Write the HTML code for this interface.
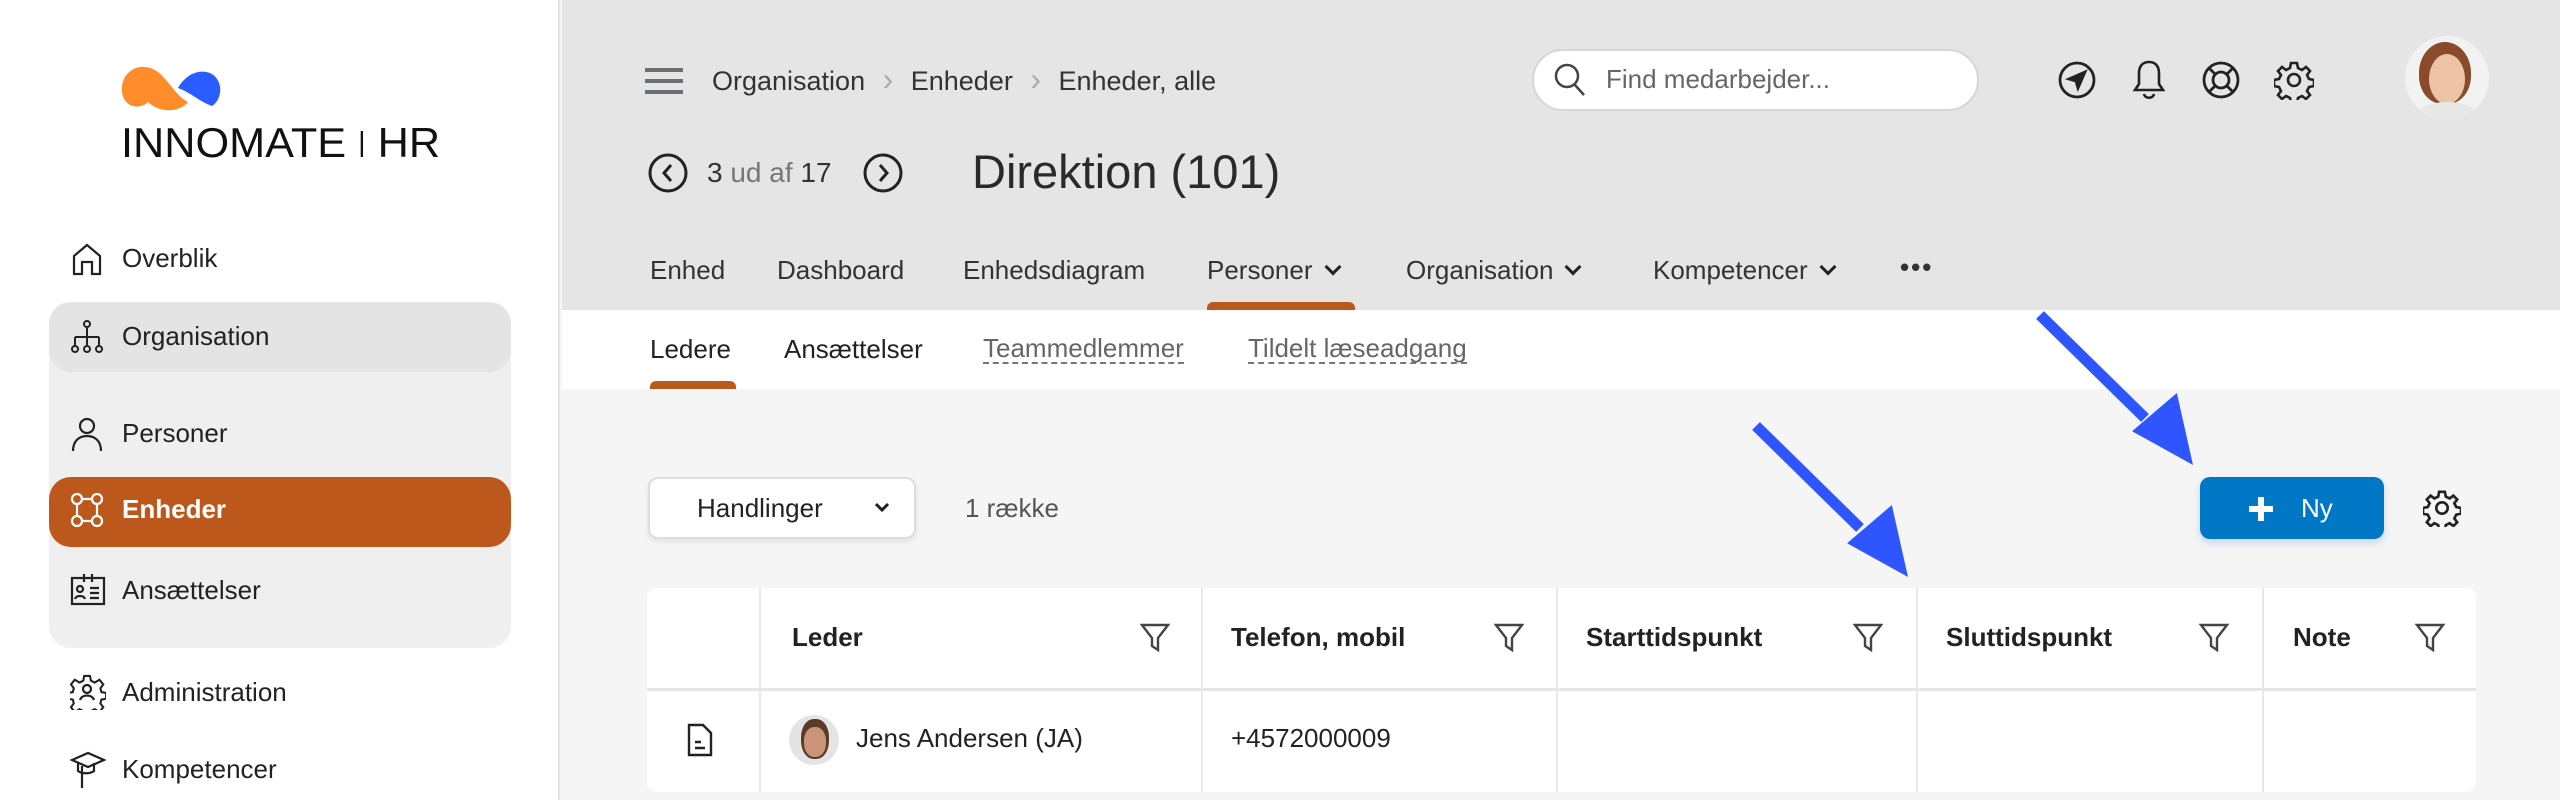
<!DOCTYPE html>
<html><head><meta charset="utf-8">
<style>
*{box-sizing:border-box;margin:0;padding:0}
body{width:2560px;height:800px;overflow:hidden;background:#f5f5f5;font-family:"Liberation Sans",sans-serif;color:#2a2a2a;position:relative}
.abs{position:absolute}
#side{left:0;top:0;width:560px;height:800px;background:#fff;border-right:2px solid #e4e4e4}
.nav{position:absolute;left:122px;font-size:26px;color:#222;line-height:30px}
.ic{position:absolute;left:70px}
#hdr{left:562px;top:0;width:1998px;height:310px;background:#e5e5e5}
#sub{left:562px;top:310px;width:1998px;height:79px;background:#fff}
.t{position:absolute;font-size:26px;line-height:30px;color:#333}
.th{position:absolute;font-size:26px;font-weight:bold;line-height:30px;color:#222}
.vl{position:absolute;top:588px;width:2px;height:204px;background:#e8e8e8}
.cv{display:inline-block;width:12px;height:12px;border-right:3px solid #222;border-bottom:3px solid #222;transform:rotate(45deg);margin-left:14px;vertical-align:6px}
</style></head><body>
<div id="side" class="abs">
  <svg class="abs" style="left:120px;top:62px" width="110" height="52" viewBox="0 0 110 52">
    <path d="M2 30 C0 8 22 -2 38 10 C50 20 56 34 68 40 C58 52 38 50 28 40 C20 48 4 46 2 30Z" fill="#ff8c2a"/>
    <path d="M58 26 C66 12 80 6 92 12 C104 20 102 38 92 44 C80 40 70 30 58 26Z" fill="#2a5cff"/>
  </svg>
  <div class="abs" style="left:121px;top:120px;font-size:42px;line-height:44px;color:#111;transform:scaleX(1.03);transform-origin:left">INNOMATE <span style="font-size:28px;vertical-align:6px">|</span> HR</div>
  <div class="abs" style="left:49px;top:302px;width:462px;height:346px;background:#efefef;border-radius:22px"></div>
  <div class="abs" style="left:49px;top:302px;width:462px;height:70px;background:#e4e4e4;border-radius:22px"></div>
  <div class="abs" style="left:49px;top:477px;width:462px;height:70px;background:#bd581c;border-radius:22px"></div>
  <svg class="ic" style="top:242px" width="34" height="34" viewBox="0 0 34 34" fill="none" stroke="#222" stroke-width="2.2"><path d="M4 32V14L17 3l13 11v18h-8V20h-10v12z"/></svg>
  <div class="nav" style="top:243px">Overblik</div>
  <svg class="ic" style="top:320px" width="34" height="34" viewBox="0 0 34 34" fill="none" stroke="#222" stroke-width="2"><circle cx="17" cy="4" r="3"/><path d="M17 7v10M5 17h24M5 17v8M17 17v8M29 17v8"/><circle cx="5" cy="29" r="3"/><circle cx="17" cy="29" r="3"/><circle cx="29" cy="29" r="3"/></svg>
  <div class="nav" style="top:321px">Organisation</div>
  <svg class="ic" style="top:416px" width="34" height="36" viewBox="0 0 34 36" fill="none" stroke="#222" stroke-width="2.2"><circle cx="17" cy="10" r="7"/><path d="M3 35c0-10 6-15 14-15s14 5 14 15"/></svg>
  <div class="nav" style="top:418px">Personer</div>
  <svg class="ic" style="top:492px" width="34" height="36" viewBox="0 0 34 36" fill="none" stroke="#fff" stroke-width="2.2"><circle cx="7" cy="7" r="5"/><circle cx="27" cy="7" r="5"/><circle cx="7" cy="29" r="5"/><circle cx="27" cy="29" r="5"/><path d="M12 7h10M7 12v12M27 12v12M12 29h10"/></svg>
  <div class="nav" style="top:494px;color:#fff;font-weight:bold">Enheder</div>
  <svg class="ic" style="top:572px" width="36" height="34" viewBox="0 0 36 34" fill="none" stroke="#222" stroke-width="2.2"><rect x="2" y="6" width="32" height="26"/><path d="M14 2v8M22 2v8"/><circle cx="10" cy="17" r="3"/><path d="M5 27c1-4 9-4 10 0M20 16h9M20 21h9M20 26h9"/></svg>
  <div class="nav" style="top:575px">Ansættelser</div>
  <svg class="ic" style="top:674px" width="36" height="36" viewBox="0 0 36 36" fill="none" stroke="#222" stroke-width="2.2"><path d="M15 2h6l1 5 4 2 5-3 4 5-3 4 1 4 5 1v6l-5 1-1 4 3 4-4 5-5-3-4 2-1 5h-6l-1-5-4-2-5 3-4-5 3-4-1-4-5-1v-6l5-1 1-4-3-4 4-5 5 3 4-2z" transform="scale(.95)"/><circle cx="17" cy="15" r="4"/><path d="M10 26c2-6 12-6 14 0"/></svg>
  <div class="nav" style="top:677px">Administration</div>
  <svg class="ic" style="top:750px" width="36" height="40" viewBox="0 0 36 40" fill="none" stroke="#222" stroke-width="2.2"><path d="M2 10l16-7 16 7-16 7z"/><path d="M8 13v8c4 3 12 3 16 0v-8M12 16v22"/></svg>
  <div class="nav" style="top:754px">Kompetencer</div>
</div>

<div id="hdr" class="abs"></div>
<div id="sub" class="abs"></div>
<svg class="abs" style="left:645px;top:68px" width="38" height="26"><rect y="0" width="38" height="4" fill="#6b6f75"/><rect y="11" width="38" height="4" fill="#6b6f75"/><rect y="22" width="38" height="4" fill="#6b6f75"/></svg>
<div class="t" style="left:712px;top:64px;font-size:27px">Organisation <span style="color:#aaa;margin:0 10px;font-size:32px">›</span> Enheder <span style="color:#aaa;margin:0 10px;font-size:32px">›</span> Enheder, alle</div>
<div class="abs" style="left:1532px;top:49px;width:447px;height:62px;background:#fff;border:2px solid #d6d6d6;border-radius:31px"></div>
<svg class="abs" style="left:1553px;top:62px" width="34" height="36" viewBox="0 0 34 36" fill="none" stroke="#444" stroke-width="2.5"><circle cx="14" cy="14" r="11"/><path d="M22 23l9 10"/></svg>
<div class="t" style="left:1606px;top:64px;color:#666">Find medarbejder...</div>
<svg class="abs" style="left:2057px;top:60px" width="40" height="40" viewBox="0 0 40 40" fill="none" stroke="#222" stroke-width="2.8"><circle cx="20" cy="20" r="17"/><path d="M28 12l-16 7 7 2 2 7z" fill="#222"/></svg>
<svg class="abs" style="left:2131px;top:58px" width="36" height="44" viewBox="0 0 36 44" fill="none" stroke="#222" stroke-width="2.6"><path d="M18 4c-7 0-10 5-10 11v11l-4 6h28l-4-6V15c0-6-3-11-10-11zM13 36c1 5 9 5 10 0"/></svg>
<svg class="abs" style="left:2201px;top:60px" width="40" height="40" viewBox="0 0 40 40" fill="none" stroke="#222" stroke-width="2.8"><circle cx="20" cy="20" r="17"/><circle cx="20" cy="20" r="8"/><path d="M8 8l6 6M32 8l-6 6M8 32l6-6M32 32l-6-6"/></svg>
<svg class="abs" style="left:2274px;top:60px" width="40" height="40" viewBox="0 0 40 40" fill="none" stroke="#222" stroke-width="2.6"><path d="M17 3h6l1 5 4 2 4-3 4 4-3 4 2 4 5 1v6l-5 1-2 4 3 4-4 4-4-3-4 2-1 5h-6l-1-5-4-2-4 3-4-4 3-4-2-4-5-1v-6l5-1 2-4-3-4 4-4 4 3 4-2z"/><circle cx="20" cy="20" r="6"/></svg>
<div class="abs" style="left:2405px;top:36px;width:84px;height:84px;border-radius:50%;background:#f2f2f2;overflow:hidden">
  <div class="abs" style="left:14px;top:6px;width:52px;height:62px;border-radius:50% 50% 45% 45%;background:#8a4a2c"></div>
  <div class="abs" style="left:24px;top:18px;width:36px;height:50px;border-radius:50%;background:#ecc3a6"></div>
  <div class="abs" style="left:10px;top:66px;width:64px;height:30px;border-radius:50%;background:#e8e8e8"></div>
</div>
<svg class="abs" style="left:647px;top:152px" width="42" height="42" viewBox="0 0 42 42" fill="none" stroke="#222" stroke-width="3"><circle cx="21" cy="21" r="18"/><path d="M24 13l-7 8 7 8"/></svg>
<div class="t" style="left:707px;top:158px;font-size:28px">3 <span style="color:#777">ud af</span> 17</div>
<svg class="abs" style="left:862px;top:152px" width="42" height="42" viewBox="0 0 42 42" fill="none" stroke="#222" stroke-width="3"><circle cx="21" cy="21" r="18"/><path d="M18 13l7 8-7 8"/></svg>
<div class="abs" style="left:972px;top:145px;font-size:47px;line-height:54px;color:#2a2a2a">Direktion (101)</div>
<div class="t" style="left:650px;top:255px">Enhed</div>
<div class="t" style="left:777px;top:255px">Dashboard</div>
<div class="t" style="left:963px;top:255px">Enhedsdiagram</div>
<div class="t" style="left:1207px;top:255px">Personer<span class="cv"></span></div>
<div class="t" style="left:1406px;top:255px">Organisation<span class="cv"></span></div>
<div class="t" style="left:1653px;top:255px">Kompetencer<span class="cv"></span></div>
<div class="t" style="left:1900px;top:252px;font-weight:bold;letter-spacing:2px">•••</div>
<div class="abs" style="left:1207px;top:302px;width:148px;height:8px;background:#bd581c;border-radius:6px 6px 0 0"></div>
<div class="t" style="left:650px;top:334px;color:#222">Ledere</div>
<div class="t" style="left:784px;top:334px;color:#222">Ansættelser</div>
<div class="t" style="left:983px;top:334px;color:#666;border-bottom:2px dashed #777;line-height:28px">Teammedlemmer</div>
<div class="t" style="left:1248px;top:334px;color:#666;border-bottom:2px dashed #777;line-height:28px">Tildelt læseadgang</div>
<div class="abs" style="left:650px;top:381px;width:86px;height:8px;background:#bd581c;border-radius:6px 6px 0 0"></div>
<div class="abs" style="left:648px;top:477px;width:268px;height:62px;background:#fff;border:2px solid #ddd;border-radius:10px;box-shadow:0 3px 6px rgba(0,0,0,.08)"></div>
<div class="t" style="left:697px;top:493px;color:#222">Handlinger</div>
<svg class="abs" style="left:873px;top:500px" width="18" height="14" viewBox="0 0 18 14" fill="none" stroke="#222" stroke-width="3"><path d="M3 4l6 6 6-6"/></svg>
<div class="t" style="left:965px;top:493px;color:#555">1 række</div>
<div class="abs" style="left:2200px;top:477px;width:184px;height:62px;background:#0078c6;border-radius:10px;box-shadow:0 4px 8px rgba(0,100,200,.2)"></div>
<svg class="abs" style="left:2249px;top:497px" width="24" height="24"><rect x="9" y="0" width="6" height="24" fill="#fff"/><rect x="0" y="9" width="24" height="6" fill="#fff"/></svg>
<div class="t" style="left:2301px;top:493px;color:#fff">Ny</div>
<svg class="abs" style="left:2423px;top:489px" width="38" height="38" viewBox="0 0 40 40" fill="none" stroke="#222" stroke-width="2.8"><path d="M17 3h6l1 5 4 2 4-3 4 4-3 4 2 4 5 1v6l-5 1-2 4 3 4-4 4-4-3-4 2-1 5h-6l-1-5-4-2-4 3-4-4 3-4-2-4-5-1v-6l5-1 2-4-3-4 4-4 4 3 4-2z"/><circle cx="20" cy="20" r="6"/></svg>
<div class="abs" style="left:647px;top:588px;width:1829px;height:204px;background:#fff;border-radius:10px"></div>
<div class="abs" style="left:647px;top:688px;width:1829px;height:3px;background:#e6e6e6"></div>
<div class="vl" style="left:759px"></div><div class="vl" style="left:1201px"></div><div class="vl" style="left:1556px"></div><div class="vl" style="left:1916px"></div><div class="vl" style="left:2262px"></div>
<div class="th" style="left:792px;top:622px">Leder</div>
<div class="th" style="left:1231px;top:622px">Telefon, mobil</div>
<div class="th" style="left:1586px;top:622px">Starttidspunkt</div>
<div class="th" style="left:1946px;top:622px">Sluttidspunkt</div>
<div class="th" style="left:2293px;top:622px">Note</div>
<svg width="0" height="0" style="position:absolute"><defs><g id="f"><path d="M2 3h26l-10 13v12l-6-4v-8z" fill="none" stroke="#444" stroke-width="2.4"/></g></defs></svg>
<svg class="abs" style="left:1140px;top:622px" width="30" height="32"><use href="#f"/></svg>
<svg class="abs" style="left:1494px;top:622px" width="30" height="32"><use href="#f"/></svg>
<svg class="abs" style="left:1853px;top:622px" width="30" height="32"><use href="#f"/></svg>
<svg class="abs" style="left:2199px;top:622px" width="30" height="32"><use href="#f"/></svg>
<svg class="abs" style="left:2415px;top:622px" width="30" height="32"><use href="#f"/></svg>
<svg class="abs" style="left:686px;top:722px" width="28" height="36" viewBox="0 0 28 36" fill="none" stroke="#222" stroke-width="2.4"><path d="M3 3h14l8 8v22H3z"/><path d="M9 20h6M9 26h10"/></svg>
<div class="abs" style="left:789px;top:715px;width:50px;height:50px;border-radius:50%;background:#e4e4e4;overflow:hidden">
  <div class="abs" style="left:12px;top:4px;width:28px;height:40px;border-radius:45%;background:#5a3a28"></div>
  <div class="abs" style="left:15px;top:12px;width:22px;height:30px;border-radius:45%;background:#c99478"></div>
</div>
<div class="t" style="left:856px;top:723px;color:#222">Jens Andersen (JA)</div>
<div class="t" style="left:1231px;top:723px;color:#222">+4572000009</div>
<svg class="abs" style="left:0;top:0" width="2560" height="800">
  <line x1="1756" y1="426" x2="1860" y2="528" stroke="#2e55ff" stroke-width="11"/>
  <polygon points="1908,577 1843,552 1882,508" fill="#2e55ff" transform="rotate(8 1908 577)"/>
  <line x1="2040" y1="315" x2="2145" y2="418" stroke="#2e55ff" stroke-width="11"/>
  <polygon points="2193,465 2128,440 2167,396" fill="#2e55ff" transform="rotate(8 2193 465)"/>
</svg>
</body></html>
